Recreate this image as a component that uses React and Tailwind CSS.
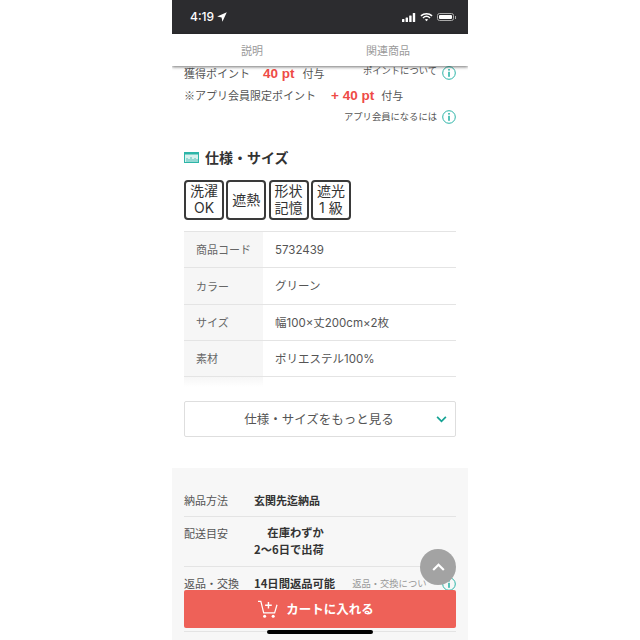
const F = { fontFamily: '"Noto Sans CJK JP", "Liberation Sans", sans-serif' };
const L = { fontFamily: 'Inter, "Noto Sans CJK JP", sans-serif' };

function Info({ className = "" }) {
  return (
    <svg viewBox="0 0 14 14" className={`w-[14px] h-[14px] shrink-0 ${className}`} fill="none">
      <circle cx="7" cy="7" r="6.3" stroke="#2db5a8" strokeWidth="1" />
      <rect x="6.2" y="5.8" width="1.6" height="5" fill="#2db5a8" />
      <rect x="6.2" y="3" width="1.6" height="1.6" fill="#2db5a8" />
    </svg>
  );
}

function Badge({ lines }) {
  return (
    <div className="w-[40px] h-[40px] border-2 border-[#3a3a3a] rounded-[4px] flex flex-col items-center justify-center pb-[2px] text-[#333] text-[14px] leading-[17px] overflow-hidden">
      {lines.map((l) => <span key={l} style={L}>{l}</span>)}
    </div>
  );
}

function SpecRow({ k, v }) {
  return (
    <div className="flex h-[36.25px] border-b border-[#e4e4e4]">
      <div className="w-[79px] bg-[#f6f6f6] pl-3 flex items-center text-[11px] text-[#666]">{k}</div>
      <div className="pl-3 pt-[2px] flex items-center text-[11.5px] text-[#555]" style={L}>{v}</div>
    </div>
  );
}

export default function App() {
  return (
    <div className="w-[640px] h-[640px] bg-white overflow-hidden" style={F}>
      <div className="relative w-[296px] h-[640px] mx-auto overflow-hidden bg-white flex flex-col">
        <div className="h-[34px] shrink-0 bg-[#2c2c2f] flex items-center justify-between pl-[18px] pr-[12px] text-white">
          <div className="flex items-center gap-[3px] text-[12px] font-medium" style={{ fontFamily: 'Inter, sans-serif' }}>
            <span>4:19</span>
            <svg viewBox="0 0 10 10" className="w-[10px] h-[10px]" fill="white"><path d="M9.8 .2 L.2 4.6 L4.6 5.4 L5.4 9.8 Z" /></svg>
          </div>
          <div className="flex items-center gap-[4px]">
            <svg viewBox="0 0 14 9" className="w-[14px] h-[9px]" fill="white">
              <rect x="0" y="6" width="2.4" height="3" rx=".5" />
              <rect x="3.6" y="4.4" width="2.4" height="4.6" rx=".5" />
              <rect x="7.2" y="2.4" width="2.4" height="6.6" rx=".5" />
              <rect x="10.8" y="0" width="2.4" height="9" rx=".5" />
            </svg>
            <svg viewBox="0 0 14 10" className="w-[13px] h-[10px]" fill="none" stroke="white" strokeWidth="1.6">
              <path d="M1 3.8 C4.4 .6 9.6 .6 13 3.8" />
              <path d="M3.2 6 C5.4 4 8.6 4 10.8 6" />
              <path d="M7 9.6 L5.2 7.8 C6.2 7 7.8 7 8.8 7.8 Z" fill="white" stroke="none" />
            </svg>
            <div className="flex items-center gap-[1px]">
              <div className="w-[17px] h-[8px] rounded-[2.5px] border border-[#aaa] p-[1px] flex"><div className="flex-1 bg-white rounded-[1px]" /></div>
              <div className="w-[1px] h-[3px] bg-[#aaa]" />
            </div>
          </div>
        </div>

        <div className="relative z-10 h-[32px] shrink-0 bg-white flex items-center text-[11px] text-[#9a9a9a] shadow-[0_1px_3px_rgba(0,0,0,0.55)]">
          <div className="w-[160px] text-center">説明</div>
          <div className="w-[112px] text-center">関連商品</div>
        </div>

        <div className="h-[43px] shrink-0 relative">
          <div className="absolute left-[12px] top-[-2px] flex items-baseline text-[11px] text-[#555]">
            <span>獲得ポイント</span>
            <span className="ml-[13px] text-[13.5px] font-bold text-[#ee4b46]" style={{ fontFamily: '"Liberation Sans", sans-serif' }}>40 pt</span>
            <span className="ml-[8px]">付与</span>
          </div>
          <div className="absolute right-[12px] top-0 flex items-center gap-[5px] text-[9.3px] text-[#555]">
            <span className="-mt-[4px]">ポイントについて</span><Info />
          </div>
          <div className="absolute left-[12px] top-[20px] flex items-baseline text-[11px] text-[#555]">
            <span>※アプリ会員限定ポイント</span>
            <span className="ml-[15px] text-[13.5px] font-bold text-[#ee4b46]" style={{ fontFamily: '"Liberation Sans", sans-serif' }}>+ 40 pt</span>
            <span className="ml-[7px]">付与</span>
          </div>
        </div>

        <div className="flex justify-end items-center gap-[5px] pr-[12px] h-[16px] text-[9.3px] text-[#555] shrink-0">
          <span>アプリ会員になるには</span><Info />
        </div>

        <div className="mt-[22px] px-[12px] flex items-center gap-[6px] h-[20px] shrink-0">
          <svg viewBox="0 0 15 11" className="w-[15px] h-[11px]">
            <rect width="15" height="11" fill="#2db5a8" />
            <rect x="1" y="2.5" width="13" height="7.5" fill="#d8f1ee" />
            <path d="M3 10V6M5 10V7M7 10V5M9 10V7M11 10V6M13 10V7" stroke="#2db5a8" strokeWidth=".8" />
          </svg>
          <span className="text-[14px] font-bold text-[#333]">仕様・サイズ</span>
        </div>

        <div className="mt-[13px] px-[12px] flex gap-[2.3px] shrink-0">
          <Badge lines={["洗濯", "OK"]} />
          <Badge lines={["遮熱"]} />
          <Badge lines={["形状", "記憶"]} />
          <Badge lines={["遮光", "1 級"]} />
        </div>

        <div className="mt-[11px] mx-[12px] border-t border-[#e4e4e4] shrink-0">
          <SpecRow k="商品コード" v="5732439" />
          <SpecRow k="カラー" v="グリーン" />
          <SpecRow k="サイズ" v="幅100×丈200cm×2枚" />
          <SpecRow k="素材" v="ポリエステル100%" />
          <div className="w-[79px] h-[10px] bg-gradient-to-b from-[#f6f6f6] to-white" />
        </div>

        <div className="mt-[14px] mx-[12px] h-[36px] shrink-0 border border-[#dedede] rounded-[2px] relative flex items-center justify-center pr-[2px] text-[12.5px] text-[#555]">
          <span>仕様・サイズをもっと見る</span>
          <svg viewBox="0 0 12 8" className="absolute right-[8px] top-[14px] w-[11px] h-[7px]" fill="none" stroke="#15a394" strokeWidth="2">
            <path d="M1 1 L6 6 L11 1" />
          </svg>
        </div>

        <div className="mt-[31px] flex-1 bg-[#f7f7f7] px-[12px] pt-[22px] text-[11px] text-[#555]">
          <div className="flex h-[27px] items-start border-b border-[#e4e4e4]">
            <span className="w-[70px] leading-[20px]">納品方法</span>
            <span className="font-bold text-[#333] leading-[20px]">玄関先迄納品</span>
          </div>
          <div className="flex h-[50px] pt-[7px] border-b border-[#e4e4e4]">
            <span className="w-[70px] leading-[18px]">配送目安</span>
            <div className="font-bold text-[#333] text-[11.3px] leading-[17px] text-right">
              <div>在庫わずか</div>
              <div>2〜6日で出荷</div>
            </div>
          </div>
          <div className="flex pt-[7px] items-start">
            <span className="w-[70px] leading-[18px]">返品・交換</span>
            <span className="font-bold text-[#333] text-[11.3px] leading-[18px]">14日間返品可能</span>
            <span className="ml-[17px] text-[9.3px] text-[#999] leading-[18px] whitespace-nowrap">返品・交換につい</span>
          </div>
        </div>

        <div className="absolute left-[270px] top-[577px]"><Info /></div>
        <div className="absolute left-[12px] top-[590px] w-[272px] h-[38px] bg-[#ee6158] rounded-[2px] flex items-center justify-center gap-[8px] text-white text-[12.5px] font-bold pr-[9px]">
          <svg viewBox="0 0 22 20" className="w-[21px] h-[19px]" fill="none" stroke="white" strokeWidth="1.3">
            <path d="M1 1.5 H4 L7 13.5 H18.5 L21 5" />
            <path d="M12 2 V9 M8.5 5.5 H15.5" strokeWidth="1.5" />
            <circle cx="8" cy="17" r="1.6" fill="white" stroke="none" />
            <circle cx="17" cy="17" r="1.6" fill="white" stroke="none" />
          </svg>
          <span>カートに入れる</span>
        </div>
        <div className="absolute left-[248px] top-[549px] w-[36px] h-[36px] rounded-full bg-[#a3a3a3] flex items-center justify-center">
          <svg viewBox="0 0 14 9" className="w-[13px] h-[8px]" fill="none" stroke="white" strokeWidth="2.4"><path d="M1 8 L7 2 L13 8" /></svg>
        </div>
        <div className="absolute left-[12px] top-[631px] w-[272px] h-[1px] bg-[#e4e4e4]" />
        <div className="absolute left-[95px] top-[630px] w-[106px] h-[4px] rounded-full bg-black" />
      </div>
    </div>
  );
}
